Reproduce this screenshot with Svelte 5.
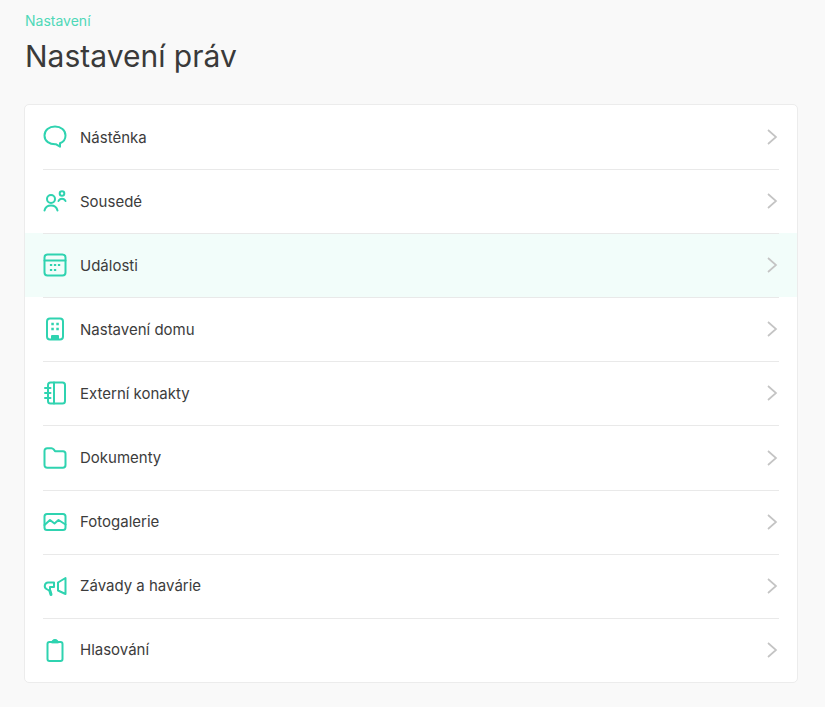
<script>
  const items = [
    { label: 'Nástěnka', icon: 'chat' },
    { label: 'Sousedé', icon: 'people' },
    { label: 'Události', icon: 'calendar', active: true },
    { label: 'Nastavení domu', icon: 'building' },
    { label: 'Externí konakty', icon: 'notebook' },
    { label: 'Dokumenty', icon: 'folder' },
    { label: 'Fotogalerie', icon: 'image' },
    { label: 'Závady a havárie', icon: 'megaphone' },
    { label: 'Hlasování', icon: 'clipboard' }
  ];
</script>

<div class="page">
  <div class="crumb">Nastavení</div>
  <h1>Nastavení práv</h1>

  <ul class="card">
    {#each items as item}
      <li class="row" class:active={item.active}>
        <svg class="icon" viewBox="0 0 24 24" width="24" height="24" fill="none" stroke="#2fd3b0" stroke-width="2" stroke-linecap="round" stroke-linejoin="round">
          {#if item.icon === 'chat'}
            <path d="M12 1.5c6 0 10.500 3.700 10.500 9 0 3.800-2.300 6.500-5.500 7.800v3.400l-3.800-2.400C6.500 19.700 1.500 16 1.500 10.500c0-5.300 4.500-9 10.500-9z" />
          {:else if item.icon === 'people'}
            <circle cx="8" cy="10" r="4" />
            <path d="M1.500 21.500c.8-3.500 3.300-5 6.500-5s5.700 1.500 6.500 5" />
            <circle cx="19" cy="4.500" r="2.300" />
            <path d="M15.500 12c.6-1.500 2-2.300 3.500-2.300s2.900.8 3.500 2.300" />
          {:else if item.icon === 'calendar'}
            <rect x="1.500" y="1.500" width="21" height="21" rx="3" />
            <path d="M1.500 7.500h21" />
            <g stroke-width="2.200" stroke-linecap="square">
              <path d="M8 12h.1M12 12h.1M16 12h.1M8 17h.1M12 17h.1" />
            </g>
          {:else if item.icon === 'building'}
            <rect x="4" y="1.500" width="16" height="21" rx="3" />
            <g stroke-width="2.400" stroke-linecap="square">
              <path d="M9.500 7h.1M14.500 7h.1M9.500 12h.1M14.500 12h.1" />
            </g>
            <path d="M9 22v-3h6v3z" fill="#2fd3b0" />
          {:else if item.icon === 'notebook'}
            <rect x="5" y="1.500" width="17" height="21" rx="2.500" />
            <path d="M11 1.500v21M2 7h5.500M2 12h5.500M2 17h5.500" />
          {:else if item.icon === 'folder'}
            <path d="M1.500 5c0-1.700 1-2.800 2.700-2.800h4.300c1 0 1.500.4 2.200 1.200l1.300 1.800h8c1.500 0 2.500 1 2.500 2.500V19c0 1.700-1 2.800-2.700 2.800H4.200c-1.700 0-2.700-1.100-2.700-2.800z" />
          {:else if item.icon === 'image'}
            <rect x="1.500" y="4" width="21" height="16" rx="2.500" />
            <path d="M1.500 15l5.500-5 4.500 3.500 4-3.500 7 4.500" />
          {:else if item.icon === 'megaphone'}
            <path d="M15 8.500L22.500 4v16L15 16.500z" />
            <path d="M11 8.500H5a3.500 3.500 0 0 0-1.500 6.500L7 17V13h4z" transform="translate(0 0)" />
            <path d="M7 17l1 3.500" stroke-width="3" />
          {:else if item.icon === 'clipboard'}
            <rect x="4" y="4" width="15" height="19" rx="2" transform="translate(0.500 0)" />
            <path d="M8.500 4.500c0-1.500 1.200-3 3.500-3s3.500 1.500 3.500 3z" fill="#2fd3b0" stroke-width="1" />
          {/if}
        </svg>
        <span class="label">{item.label}</span>
        <svg class="chev" viewBox="0 0 12 18" width="12" height="18" fill="none" stroke="#c4c4c4" stroke-width="1.700">
          <path d="M2 2l8 7-8 7" />
        </svg>
      </li>
    {/each}
  </ul>
</div>

<style>
  :global(body) {
    margin: 0;
    background: #f9f9f9;
  }
  .page {
    padding: 13px 27px 0 24px;
    font-family: Inter, "Open Sans", sans-serif;
    color: #3a3a3a;
  }
  .crumb {
    font-size: 14px;
    line-height: 16px;
    color: #4fd8b8;
    padding-left: 1px;
  }
  h1 {
    margin: 9px 0 29px 1px;
    font-size: 30px;
    line-height: 37px;
    font-weight: 400;
    color: #3a3a3a;
  }
  .card {
    list-style: none;
    margin: 0;
    padding: 0;
    background: #fff;
    border: 1px solid #ececec;
    border-radius: 5px;
    overflow: hidden;
  }
  .row {
    position: relative;
    display: flex;
    align-items: center;
    height: 64.1px;
    padding: 0 18px;
    box-sizing: border-box;
  }
  .row + .row::before {
    content: '';
    position: absolute;
    top: 0;
    left: 18px;
    right: 18px;
    height: 1px;
    background: #e9e9e9;
  }
  .row.active {
    background: #f2fdfa;
  }
  .icon {
    flex-shrink: 0;
  }
  .label {
    flex: 1;
    margin-left: 13px;
    font-size: 15px;
    color: #3c3c3c;
  }
  .chev {
    flex-shrink: 0;
    margin-right: 1px;
  }
</style>
